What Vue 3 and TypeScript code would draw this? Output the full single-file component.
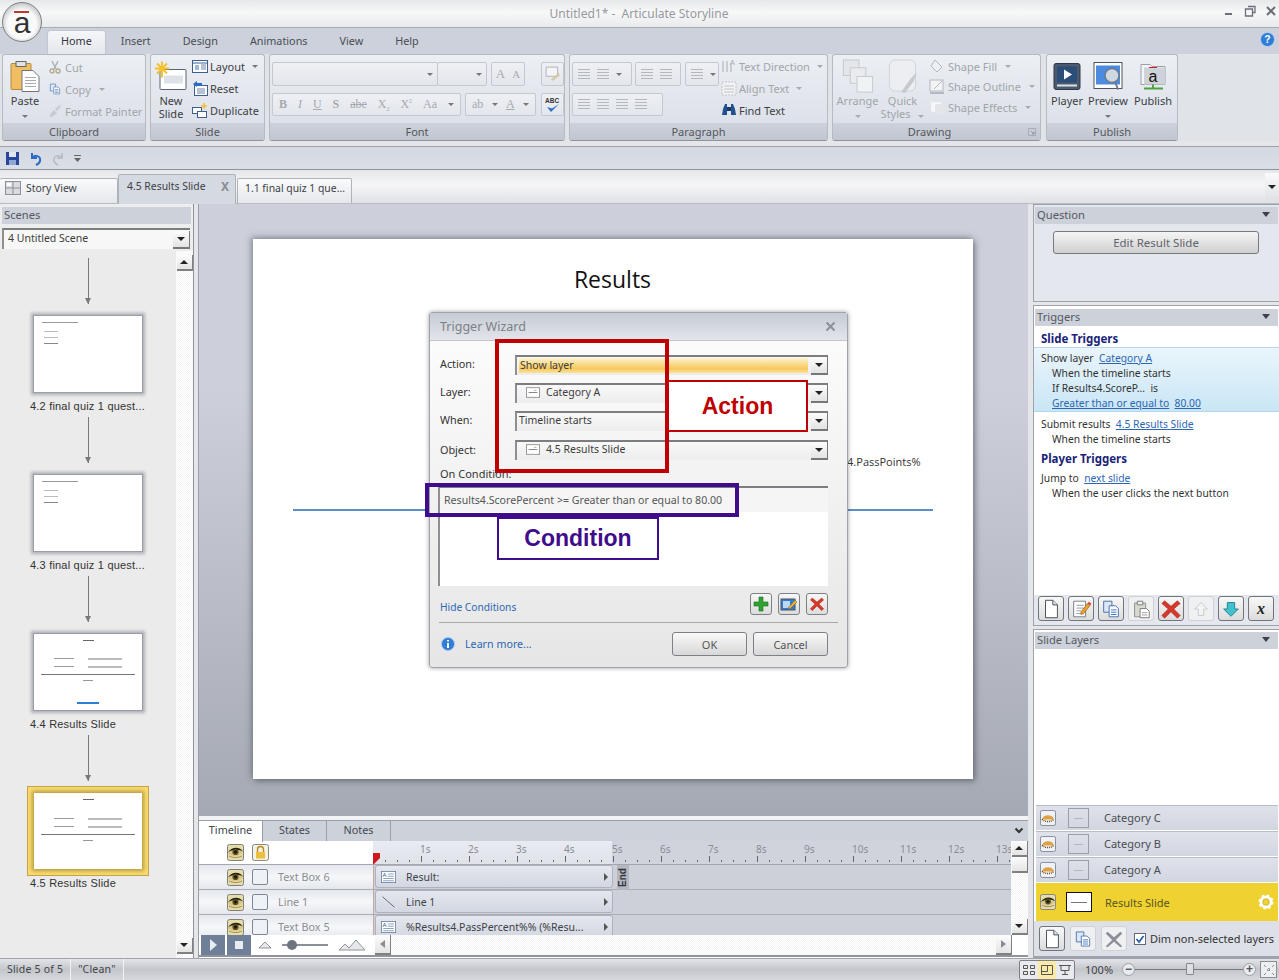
<script setup lang="ts">
import { computed } from 'vue';

interface SlideThumb {
  name: string;
  kind: 'quiz' | 'results' | 'final';
}

const slides: SlideThumb[] = [
  { name: '4.2 final quiz 1 quest...', kind: 'quiz' },
  { name: '4.3 final quiz 1 quest...', kind: 'quiz' },
  { name: '4.4 Results Slide', kind: 'results' },
  { name: '4.5 Results Slide', kind: 'final' },
];

const ribbonTabs = ['Insert', 'Design', 'Animations', 'View', 'Help'];

const triggerTools = ['doc', 'edit', 'copy', 'paste', 'cross', 'up', 'down', 'var'];

const layers = ['Category C', 'Category B', 'Category A'];

const tracks = [
  { name: 'Text Box 6', label: 'Result:', icon: 'textbox' },
  { name: 'Line 1', label: 'Line 1', icon: 'line' },
  { name: 'Text Box 5', label: '%Results4.PassPercent%% (%Resu...', icon: 'textbox' },
];

const secondPx = 48;

// ruler is 637px wide, one label per second and a small tick every quarter
const ticks = computed(() => {
  const list: { x: number; major: boolean }[] = [];
  for (let i = 1; i <= 53; i++) {
    list.push({ x: i * (secondPx / 4), major: i % 4 === 0 });
  }
  return list;
});

const seconds = computed(() => Array.from({ length: 13 }, (_, i) => i + 1));
</script>

<template>
  <svg class="defs" width="0" height="0">
    <symbol id="eye" viewBox="0 0 17 17">
      <rect x=".5" y=".5" width="16" height="16" rx="2" fill="#e6dcaa" stroke="#80807a" />
      <path d="M1 9C4 3 13 2 16 8 13 13 5 14 1 9z" fill="#d8c588" />
      <path d="M1 8.500C4 2.500 13 2 16 7.500 12 5.500 5 5.500 1 8.500z" fill="#26231a" />
      <circle cx="8.500" cy="8" r="3.100" fill="#5b4f20" />
      <circle cx="8.500" cy="8" r="1.400" fill="#14110a" />
      <path d="M2 12c4 2 9 2 13 0" stroke="#a08a4d" fill="none" />
    </symbol>
    <symbol id="eye-shut" viewBox="0 0 17 17">
      <rect x=".5" y=".5" width="16" height="16" rx="2" fill="#eef1f6" stroke="#7e8795" />
      <path d="M2 10C3 4 14 4 15 10z" fill="#e0a145" />
      <path d="M2 10c4 3 9 3 13 0" stroke="#6b4a15" stroke-width="1.600" fill="none" stroke-dasharray="1 1" />
    </symbol>
    <symbol id="doc" viewBox="0 0 24 24">
      <path d="M6 2.500h8l5 5v14H6z" fill="#fff" stroke="#3c4654" />
      <path d="M14 2.500v5h5" fill="#dfe8f2" stroke="#3c4654" />
    </symbol>
    <symbol id="edit" viewBox="0 0 24 24">
      <path d="M4 3.500h13v17H4z" fill="#fff" stroke="#6d7785" />
      <path d="M7 8h8M7 11h8M7 14h5M7 17h5" stroke="#8c95a3" />
      <path d="M12 15l7-9 3 2-7 9-3 1z" fill="#e8a233" stroke="#8d5c14" stroke-width=".7" />
      <path d="M19 6l1.500-2 3 2-1.500 2z" fill="#d8493f" />
    </symbol>
    <symbol id="copy" viewBox="0 0 24 24">
      <path d="M4 3.500h9v12H4z" fill="#dce8f8" stroke="#3f69a8" />
      <path d="M10 8.500h7l3 3v9H10z" fill="#fff" stroke="#3f69a8" />
      <path d="M12 13h6M12 15.500h6M12 18h6" stroke="#2f6fc0" />
    </symbol>
    <symbol id="paste" viewBox="0 0 24 24">
      <path d="M5 5.500h12v15H5z" fill="#d9d9d2" stroke="#8a8a86" />
      <path d="M8 3.500h6v4H8z" fill="#eee" stroke="#777" />
      <path d="M11 11.500h7l3 3v7H11z" fill="#fff" stroke="#777" />
      <path d="M13 16h6M13 18.500h6" stroke="#999" />
    </symbol>
    <symbol id="cross" viewBox="0 0 24 24">
      <path d="M5 3l7 6 7-6 3 3-7 6 7 7-3 3-7-7-7 7-3-3 7-7-7-6z" fill="#d4392a" stroke="#9c2318" stroke-width=".6" />
    </symbol>
    <symbol id="up" viewBox="0 0 24 24">
      <path d="M12 5l7 7h-4v7H9v-7H5z" fill="#f4f4f4" stroke="#c7c7c7" />
    </symbol>
    <symbol id="down" viewBox="0 0 24 24">
      <path d="M12 20l8-8h-4V5H8v7H4z" fill="#41c3cf" stroke="#1f7d90" />
    </symbol>
    <symbol id="slide-mini" viewBox="0 0 16 12">
      <rect x=".5" y=".5" width="15" height="11" fill="#fff" stroke="#8c8c8c" />
      <path d="M3 6h10" stroke="#777" />
      <path d="M9 3.500h3" stroke="#aaa" />
    </symbol>
  </svg>

  <div class="app">
    <header class="titlebar">
      <div class="logo"><span class="logo-bar"></span><span class="logo-a">a</span></div>
      <span class="title-text">Untitled1* -&nbsp; Articulate Storyline</span>
      <div class="win-btns">
        <svg width="12" height="12" viewBox="0 0 12 12"><path d="M2 9h7" stroke="#6b6f78" stroke-width="2" /></svg>
        <svg width="12" height="12" viewBox="0 0 12 12"><path d="M4 1.500h7v6H9M1.500 4h7v7h-7z" fill="none" stroke="#6b6f78" stroke-width="1.300" /></svg>
        <svg width="12" height="12" viewBox="0 0 12 12"><path d="M2 2l8 8M10 2l-8 8" stroke="#6b6f78" stroke-width="2" /></svg>
      </div>
    </header>

    <nav class="ribbon-tabs">
      <div class="rtab rtab-active">Home</div>
      <div v-for="tab in ribbonTabs" :key="tab" class="rtab">{{ tab }}</div>
      <svg class="help" width="15" height="15" viewBox="0 0 16 16">
        <circle cx="8" cy="8" r="7.500" fill="#2f7dd6" stroke="#bcd6f2" />
        <text x="8" y="12" text-anchor="middle" font-size="11" font-weight="700" font-family="Liberation Sans" fill="#fff">?</text>
      </svg>
    </nav>

    <section class="ribbon">
      <div class="group g-clip">
        <div class="group-body">
          <div class="big w40">
            <svg class="big-ico" width="30" height="32" viewBox="0 0 30 32">
              <rect x="1" y="3" width="20" height="26" rx="1" fill="#f1bd62" stroke="#b78a3b" />
              <rect x="6" y="1" width="10" height="5" fill="#dfe3e8" stroke="#666" />
              <path d="M12 10h11l6 6v15H12z" fill="#fff" stroke="#70757d" />
              <path d="M15 17h11M15 20h11M15 23h11M15 26h11" stroke="#a7acb4" />
            </svg>
            <span>Paste</span>
            <i class="caret caret-big"></i>
          </div>
          <div class="small-col dim">
            <div class="small"><svg width="14" height="14" viewBox="0 0 14 14"><path d="M4 1l4 8M10 1L6 9" stroke="#a9adb4" stroke-width="1.300" /><circle cx="4" cy="11" r="2" fill="none" stroke="#b1a98c" stroke-width="1.300" /><circle cx="10" cy="11" r="2" fill="none" stroke="#b1a98c" stroke-width="1.300" /></svg>Cut</div>
            <div class="small"><svg width="14" height="14"><use href="#copy" /></svg>Copy <i class="caret"></i></div>
            <div class="small"><svg width="14" height="14" viewBox="0 0 14 14"><path d="M1 12l5-6 3 3-5 4zM7 5l5-4 1 1-4 5z" fill="#c6c9ce" /></svg>Format Painter</div>
          </div>
        </div>
        <div class="group-label">Clipboard</div>
      </div>

      <div class="group g-slide">
        <div class="group-body">
          <div class="big w36">
            <svg class="big-ico" width="32" height="32" viewBox="0 0 32 32">
              <rect x="5" y="9" width="26" height="20" rx="1" fill="#fff" stroke="#5a6472" />
              <rect x="9" y="15" width="19" height="8" fill="#dde1e8" />
              <path d="M7 1v16M0 8h14M2 3l10 10M12 3L2 13" stroke="#f3c22e" stroke-width="2" />
            </svg>
            <span>New</span><span>Slide</span>
          </div>
          <div class="small-col tight">
            <div class="small"><svg width="16" height="16" viewBox="0 0 16 16"><rect x=".5" y="2.500" width="15" height="12" fill="#fff" stroke="#3d5f90" /><path d="M.5 5h15" stroke="#3d5f90" /><path d="M3 7h4v5H3z" fill="#9fb7d8" /><path d="M9 7h5M9 9h5M9 11h5" stroke="#6c85a8" /></svg>Layout <i class="caret"></i></div>
            <div class="small"><svg width="16" height="16" viewBox="0 0 16 16"><rect x="2.500" y="5.500" width="13" height="10" fill="#fff" stroke="#3d5f90" /><path d="M5 9h8M5 11h8M5 13h8" stroke="#6c85a8" /><path d="M1 4l4-3v2h5v3H5v1z" fill="#2e6cc4" /></svg>Reset</div>
            <div class="small"><svg width="16" height="16" viewBox="0 0 16 16"><rect x=".5" y="5.500" width="9" height="6" fill="#fff" stroke="#3d5f90" /><rect x="5.500" y="9.500" width="9" height="6" fill="#fff" stroke="#3d5f90" /><path d="M12 1v6M9 4h6" stroke="#f3c22e" stroke-width="1.600" /></svg>Duplicate</div>
          </div>
        </div>
        <div class="group-label">Slide</div>
      </div>

      <div class="group g-font">
        <div class="group-body stacked">
          <div class="tool-row row-a">
            <div class="tool-box w166"><i class="caret"></i></div>
            <div class="tool-box w50"><i class="caret"></i></div>
            <div class="tool-box w34 ml4 dim-serif"><span>A</span><small>A</small></div>
            <div class="tool-box w23 ml16"><svg width="16" height="16" viewBox="0 0 14 14"><rect x="1" y="1" width="10" height="8" fill="#f4f4f4" stroke="#b9bcc2" /><path d="M5 12l7-6 1 2-6 5z" fill="#d5c9a6" /></svg></div>
          </div>
          <div class="tool-row row-b">
            <div class="tool-box w189 dim-serif fmt">
              <b>B</b><em>I</em><u>U</u><b>S</b><s>abe</s><span>X<sub>2</sub></span><span>X<sup>2</sup></span><span>Aa</span><i class="caret"></i>
            </div>
            <div class="tool-box w71 ml4 dim-serif fmt"><span>ab</span><i class="caret"></i><u>A</u><i class="caret"></i></div>
            <div class="tool-box w23 ml5"><svg width="18" height="18" viewBox="0 0 18 18"><text x="1" y="7" font-size="6.500" font-weight="700" font-family="Liberation Sans" fill="#333">ABC</text><path d="M3 11l4 5 8-8-7 4.500z" fill="#2d6fc4" /></svg></div>
          </div>
        </div>
        <div class="group-label">Font</div>
      </div>

      <div class="group g-para">
        <div class="group-body">
          <div class="stacked para-left">
            <div class="tool-row row-a">
              <div class="tool-box w60 lines"><i></i><i></i><i class="caret"></i></div>
              <div class="tool-box w46 ml3 lines"><i></i><i></i></div>
              <div class="tool-box w34 ml4 lines"><i></i><i class="caret"></i></div>
            </div>
            <div class="tool-row row-b">
              <div class="tool-box w91 lines"><i></i><i></i><i></i><i></i></div>
            </div>
          </div>
          <div class="small-col tight">
            <div class="small dim"><svg width="16" height="16" viewBox="0 0 16 16"><path d="M2 3v11M6 3v11M10 5v9" stroke="#a7abb2" /><text x="9" y="7" font-size="7" font-family="Liberation Sans" fill="#a7abb2">A</text></svg>Text Direction <i class="caret"></i></div>
            <div class="small dim"><svg width="16" height="16" viewBox="0 0 16 16"><rect x="1" y="2" width="14" height="13" fill="#f2f3f5" stroke="#c1c4ca" stroke-dasharray="2 1" /><path d="M3 6h10M3 9h10M3 12h10" stroke="#c1c4ca" /></svg>Align Text <i class="caret"></i></div>
            <div class="small"><svg width="16" height="16" viewBox="0 0 16 16"><path d="M2 7l2-5h2v11H1zM14 7l-2-5h-2v11h5z" fill="#24508f" /><path d="M6 5h4v4H6z" fill="#1c3c6c" /></svg>Find Text</div>
          </div>
        </div>
        <div class="group-label">Paragraph</div>
      </div>

      <div class="group g-draw">
        <div class="group-body">
          <div class="big w44 dim">
            <svg class="big-ico" width="32" height="36" viewBox="0 0 32 36"><rect x="1" y="1" width="16" height="16" fill="#e4e6ea" stroke="#c6c9cf" /><rect x="8" y="9" width="16" height="16" fill="#e9ebee" stroke="#c6c9cf" /><rect x="15" y="18" width="16" height="16" fill="#f1f2f4" stroke="#c6c9cf" /></svg>
            <span>Arrange</span>
            <i class="caret caret-big"></i>
          </div>
          <div class="big w44 dim">
            <svg class="big-ico" width="32" height="36" viewBox="0 0 32 36"><rect x="2" y="1" width="27" height="32" rx="6" fill="#eceef1" stroke="#d0d3d8" /><path d="M14 34l10-14 6-6-3 9-9 12z" fill="#c6c9ce" /></svg>
            <span>Quick</span><span>Styles <i class="caret"></i></span>
          </div>
          <div class="small-col dim shape-col">
            <div class="small"><svg width="16" height="16" viewBox="0 0 16 16"><path d="M6 2l7 7-5 5-6-6z" fill="#eef0f3" stroke="#b5b8be" /></svg>Shape Fill <i class="caret"></i></div>
            <div class="small"><svg width="16" height="16" viewBox="0 0 16 16"><rect x="1" y="1" width="13" height="11" fill="#f2f3f5" stroke="#b5b8be" /><path d="M1 14h14" stroke="#b5b8be" stroke-width="2" /><path d="M5 10l8-8" stroke="#b5b8be" /></svg>Shape Outline <i class="caret"></i></div>
            <div class="small"><svg width="16" height="16" viewBox="0 0 16 16"><rect x="2" y="3" width="11" height="10" rx="2" fill="#f5f6f7" /><rect x="6" y="5" width="9" height="10" rx="2" fill="#e3e5e9" /></svg>Shape Effects <i class="caret"></i></div>
          </div>
        </div>
        <div class="group-label label-launch">
          Drawing
          <svg class="launcher" width="8" height="8" viewBox="0 0 8 8"><path d="M.5.5h7v7h-7z" fill="none" stroke="#a7abb2" /><path d="M3 3l3 3M6 4v2H4" fill="none" stroke="#8f939b" /></svg>
        </div>
      </div>

      <div class="group g-pub">
        <div class="group-body pub-body">
          <div class="big w40p nowrap">
            <svg class="big-ico" width="28" height="32" viewBox="0 0 28 32"><rect x="1" y="3" width="26" height="26" rx="2" fill="#4b5a6d" stroke="#2f3946" /><rect x="4" y="6" width="20" height="16" fill="#2a4e78" /><path d="M11 9l8 5-8 5z" fill="#fff" /><path d="M4 25h20" stroke="#dfe3e8" stroke-width="2" /></svg>
            <span>Player</span>
          </div>
          <div class="big w42p nowrap">
            <svg class="big-ico" width="30" height="32" viewBox="0 0 30 32"><rect x="1" y="2" width="28" height="26" fill="#fff" stroke="#4c5560" /><rect x="3" y="5" width="24" height="19" fill="#4c8be0" /><circle cx="19" cy="15" r="7" fill="#cfd8e2" stroke="#6e7b8a" stroke-width="1.500" /><path d="M22 21l3 8" stroke="#6e7b8a" stroke-width="2" /></svg>
            <span>Preview</span>
            <i class="caret caret-big"></i>
          </div>
          <div class="big w48p nowrap">
            <svg class="big-ico" width="30" height="32" viewBox="0 0 30 32"><path d="M3 4h9l2 2h13v18H3z" fill="#f4f5f7" stroke="#9aa0a8" /><rect x="6" y="7" width="21" height="17" fill="#cfd2d8" /><text x="15" y="21" text-anchor="middle" font-size="16" font-family="Liberation Sans" fill="#111">a</text><path d="M11 7h8" stroke="#c22" /><path d="M6 28h19M15 24v4" stroke="#4ea33a" stroke-width="2" /></svg>
            <span>Publish</span>
          </div>
        </div>
        <div class="group-label">Publish</div>
      </div>
    </section>

    <section class="qat">
      <svg width="15" height="15" viewBox="0 0 15 15"><rect x="1" y="1" width="13" height="13" fill="#28479a" /><rect x="4" y="1" width="7" height="5" fill="#dfe6f4" /><rect x="4" y="9" width="7" height="5" fill="#8fa6d6" /></svg>
      <svg class="q-undo" width="15" height="15" viewBox="0 0 15 15"><path d="M4 2v5h5M4 7c3-4 9-2 8 3-.3 2-2 3-4 4" fill="none" stroke="#2b6bc4" stroke-width="2" /></svg>
      <svg class="q-redo" width="15" height="15" viewBox="0 0 15 15"><path d="M11 2v5H6M11 7C8 3 2 5 3 10c.3 2 2 3 4 4" fill="none" stroke="#b5b9c0" stroke-width="1.500" /></svg>
      <svg class="q-more" width="9" height="9" viewBox="0 0 9 9"><path d="M1 1.500h7" stroke="#666" /><path d="M1 4h7L4.500 8z" fill="#666" /></svg>
    </section>

    <section class="doc-tabs">
      <div class="dtab dtab-story">
        <svg width="16" height="14" viewBox="0 0 16 14"><rect x=".5" y=".5" width="15" height="13" fill="#d8dbe0" stroke="#8d9097" /><path d="M8 .5v13M.5 7h15" stroke="#8d9097" /><rect x="2" y="2" width="4" height="3" fill="#fff" /></svg>
        Story View
      </div>
      <div class="dtab dtab-active">4.5 Results Slide <span class="dtab-x">X</span></div>
      <div class="dtab dtab-other">1.1 final quiz 1 que...</div>
      <div class="dtab-more"><i class="arrow-down"></i></div>
    </section>

    <main class="workspace">
      <aside class="left">
        <div class="panel-head">Scenes</div>
        <div class="combo scene-combo">
          <span>4 Untitled Scene</span>
          <span class="combo-btn"><i class="arrow-down"></i></span>
        </div>
        <div class="scene-body">
          <div class="thumb-list">
            <div v-for="slide in slides" :key="slide.name" class="thumb-item">
              <div class="connector"><i></i></div>
              <div class="thumb" :class="{ 'thumb-on': slide.kind === 'final' }">
                <template v-if="slide.kind === 'quiz'">
                  <div class="q-line"></div>
                  <div class="q-opt"></div>
                  <div class="q-opt"></div>
                  <div class="q-opt q-opt-on"></div>
                </template>
                <template v-else>
                  <div class="r-title"></div>
                  <div class="r-row"><i></i><b></b></div>
                  <div class="r-row"><i></i><b></b></div>
                  <div class="r-line"></div>
                  <div class="r-foot"></div>
                  <div v-if="slide.kind === 'results'" class="r-btn"></div>
                </template>
              </div>
              <div class="thumb-name">{{ slide.name }}</div>
            </div>
          </div>
          <div class="vscroll scene-scroll">
            <div class="sbtn"><i class="arrow-up"></i></div>
            <div class="sbtn"><i class="arrow-down"></i></div>
          </div>
        </div>
      </aside>

      <div class="center">
        <div class="stage">
          <div class="slide">
            <div class="slide-title">Results</div>
            <div class="slide-var">%Results4.PassPoints%</div>
            <div class="slide-rule"></div>
          </div>

          <div class="dialog">
            <div class="dialog-title">
              <span>Trigger Wizard</span>
              <svg width="11" height="11" viewBox="0 0 11 11"><path d="M1.500 1.500l8 8M9.500 1.500l-8 8" stroke="#8b9099" stroke-width="2" /></svg>
            </div>
            <div class="dialog-form">
              <label>Action:</label>
              <div class="combo"><span class="combo-hi">Show layer</span><span class="combo-btn"><i class="arrow-down"></i></span></div>
              <label>Layer:</label>
              <div class="combo"><span class="combo-val"><svg width="14" height="11"><use href="#slide-mini" /></svg>Category A</span><span class="combo-btn"><i class="arrow-down"></i></span></div>
              <label>When:</label>
              <div class="combo"><span>Timeline starts</span><span class="combo-btn"><i class="arrow-down"></i></span></div>
              <label class="obj-label">Object:</label>
              <div class="combo"><span class="combo-val"><svg width="14" height="11"><use href="#slide-mini" /></svg>4.5 Results Slide</span><span class="combo-btn"><i class="arrow-down"></i></span></div>
            </div>
            <div class="cond-label">On Condition:</div>
            <div class="cond-list">
              <div class="cond-row">Results4.ScorePercent &gt;= Greater than or equal to 80.00</div>
            </div>
            <div class="cond-actions">
              <span class="link hide-link">Hide Conditions</span>
              <div class="cond-btns">
                <button><svg width="16" height="16" viewBox="0 0 16 16"><path d="M6 1h4v5h5v4h-5v5H6v-5H1V6h5z" fill="#2fa32f" stroke="#1c6d1c" stroke-width=".6" /></svg></button>
                <button><svg width="18" height="16" viewBox="0 0 18 16"><rect x="1" y="3" width="14" height="11" fill="#2f7dd6" stroke="#555" /><rect x="3" y="5" width="7" height="7" fill="#bcd8f6" /><path d="M8 12l7-8 2 2-7 7z" fill="#e8b23b" stroke="#7a5a13" stroke-width=".5" /></svg></button>
                <button><svg width="16" height="16" viewBox="0 0 24 24"><use href="#cross" /></svg></button>
              </div>
            </div>
            <div class="dialog-foot">
              <svg width="14" height="14" viewBox="0 0 14 14"><circle cx="7" cy="7" r="6.500" fill="#2f7dd6" stroke="#a9c8ee" /><path d="M7 3v1.500M7 6v5" stroke="#fff" stroke-width="2" /></svg>
              <span class="link learn">Learn more...</span>
              <button class="dlg-btn">OK</button>
              <button class="dlg-btn">Cancel</button>
            </div>

            <div class="note note-red"></div>
            <div class="note note-action">Action</div>
            <div class="note note-purple"></div>
            <div class="note note-cond">Condition</div>
          </div>
        </div>

        <div class="timeline">
          <div class="tl-tabs">
            <div class="tl-tab tl-tab-on">Timeline</div>
            <div class="tl-tab">States</div>
            <div class="tl-tab">Notes</div>
            <svg class="tl-chev" width="10" height="8" viewBox="0 0 10 8"><path d="M1.500 1.500L5 5l3.500-3.500" fill="none" stroke="#333" stroke-width="2" /></svg>
          </div>
          <div class="tl-main">
            <div class="tl-grid">
              <div class="tl-head">
                <div class="tl-head-left">
                  <svg width="17" height="17"><use href="#eye" /></svg>
                  <svg class="lock" width="17" height="17" viewBox="0 0 17 17"><rect x=".5" y=".5" width="16" height="16" rx="2" fill="#f3f1e4" stroke="#8a8a80" /><path d="M5.500 8V5.500a3 3 0 016 0V8" fill="none" stroke="#b98a1e" stroke-width="1.400" /><rect x="4" y="8" width="9" height="6.500" fill="#edbf3f" /></svg>
                </div>
                <div class="ruler">
                  <div class="ruler-past"></div>
                  <span v-for="s in seconds" :key="s" class="ruler-num" :style="{ left: s * secondPx + 'px' }">{{ s }}s</span>
                  <i v-for="t in ticks" :key="t.x" class="tick" :class="{ 'tick-big': t.major }" :style="{ left: t.x + 'px' }"></i>
                  <svg class="playhead" width="7" height="11" viewBox="0 0 7 11"><path d="M0 0h7v5l-6 6H0z" fill="#d0181f" /></svg>
                </div>
              </div>
              <div v-for="tr in tracks" :key="tr.name" class="tl-row">
                <div class="tl-name">
                  <svg width="17" height="17"><use href="#eye" /></svg>
                  <span class="tl-check"></span>
                  <span class="tl-label">{{ tr.name }}</span>
                </div>
                <div class="tl-bar">
                  <svg v-if="tr.icon === 'textbox'" width="15" height="12" viewBox="0 0 20 16">
                    <rect x=".5" y=".5" width="19" height="15" fill="#fff" stroke="#5e7696" />
                    <text x="2" y="8.500" font-size="8" font-family="Liberation Sans" fill="#26518a">A</text>
                    <path d="M9 4h8M9 7h8M3 10h14M3 13h14" stroke="#6a84a8" />
                  </svg>
                  <svg v-else width="15" height="12" viewBox="0 0 20 16"><path d="M2 1l16 14" stroke="#444" /></svg>
                  <span>{{ tr.label }}</span>
                  <i class="arrow-right"></i>
                </div>
                <div class="tl-rest"></div>
              </div>
              <div class="end-tag">End</div>
            </div>
            <div class="vscroll tl-scroll">
              <div class="sbtn"><i class="arrow-up"></i></div>
              <div class="sbtn sthumb"></div>
              <div class="sbtn"><i class="arrow-down"></i></div>
            </div>
          </div>
          <div class="tl-bottom">
            <div class="tl-play"><i class="play"></i></div>
            <div class="tl-play"><i class="stop"></i></div>
            <div class="tl-zoom">
              <svg width="14" height="8" viewBox="0 0 14 8"><path d="M1 7l6-6 6 6z" fill="#e6e8ec" stroke="#8f949c" /></svg>
              <div class="tl-slider"><i></i></div>
              <svg width="28" height="12" viewBox="0 0 28 12"><path d="M1 11l6-6 4 4 7-8 9 10z" fill="#e6e8ec" stroke="#8f949c" /></svg>
            </div>
            <div class="tl-hscroll">
              <div class="sbtn"><i class="arrow-left"></i></div>
              <div class="sbtn"><i class="arrow-right grey"></i></div>
            </div>
          </div>
        </div>
      </div>

      <aside class="right">
        <div class="rpanel rp-question">
          <div class="panel-head with-arrow">Question<i class="arrow-down"></i></div>
          <button class="edit-slide">Edit Result Slide</button>
        </div>

        <div class="rpanel rp-triggers">
          <div class="panel-head with-arrow">Triggers<i class="arrow-down"></i></div>
          <div class="trig-list">
            <div class="trig-head">Slide Triggers</div>
            <div class="trig-sel">
              <div class="trig">Show layer&nbsp; <a>Category A</a></div>
              <div class="trig in">When the timeline starts</div>
              <div class="trig in">If Results4.ScoreP...&nbsp; is</div>
              <div class="trig in"><a>Greater than or equal to</a>&nbsp; <a>80.00</a></div>
            </div>
            <div class="trig">Submit results&nbsp; <a>4.5 Results Slide</a></div>
            <div class="trig in">When the timeline starts</div>
            <div class="trig-head th2">Player Triggers</div>
            <div class="trig sp2">Jump to&nbsp; <a>next slide</a></div>
            <div class="trig in">When the user clicks the next button</div>
          </div>
          <div class="trig-tools">
            <button v-for="tool in triggerTools" :key="tool" :class="{ faded: tool === 'up' || tool === 'paste' }">
              <span v-if="tool === 'var'" class="var-x">x</span>
              <svg v-else width="22" height="22"><use :href="'#' + tool" /></svg>
            </button>
          </div>
        </div>

        <div class="rpanel rp-layers">
          <div class="panel-head with-arrow">Slide Layers<i class="arrow-down"></i></div>
          <div class="layer-space"></div>
          <div v-for="layer in layers" :key="layer" class="layer">
            <svg width="16" height="16"><use href="#eye-shut" /></svg>
            <span class="layer-thumb"><i></i></span>
            <span class="layer-name">{{ layer }}</span>
          </div>
          <div class="layer layer-on">
            <svg width="16" height="16"><use href="#eye" /></svg>
            <span class="layer-thumb"><i></i></span>
            <span>Results Slide</span>
            <svg class="gear" width="16" height="16" viewBox="0 0 16 16"><circle cx="8" cy="8" r="5" fill="none" stroke="#fff" stroke-width="3" /><circle cx="8" cy="8" r="6.500" fill="none" stroke="#fff" stroke-width="2" stroke-dasharray="2.500 2.600" /><circle cx="8" cy="8" r="3.200" fill="none" stroke="#b5a24a" stroke-width=".6" /></svg>
          </div>
          <div class="layer-tools">
            <button><svg width="22" height="22"><use href="#doc" /></svg></button>
            <button class="faded"><svg width="20" height="20"><use href="#copy" /></svg></button>
            <button class="faded"><svg width="22" height="22" viewBox="0 0 24 24"><path d="M5 4l7 6 7-6 2 2-7 7 7 7-2 1-7-6-7 6-2-1 7-7-7-7z" fill="#8b8f96" /></svg></button>
            <span class="chk"><svg width="10" height="10" viewBox="0 0 10 10"><path d="M1.500 5l2.500 3 4.500-6" fill="none" stroke="#2b5fa8" stroke-width="1.800" /></svg></span>
            <span class="chk-label">Dim non-selected layers</span>
          </div>
        </div>
      </aside>
    </main>

    <footer class="statusbar">
      <div class="st-cell">Slide 5 of 5</div>
      <div class="st-cell">"Clean"</div>
      <div class="st-fill"></div>
      <div class="st-views">
        <span><svg width="14" height="12" viewBox="0 0 14 12"><path d="M1.500 1.500h4v3h-4zM8.500 1.500h4v3h-4zM1.500 7.500h4v3h-4zM8.500 7.500h4v3h-4z" fill="none" stroke="#555" /></svg></span>
        <span class="st-view-on"><svg width="14" height="12" viewBox="0 0 14 12"><path d="M1.500 1.500h11v9h-11zM7.500 1.500v6h-6" fill="none" stroke="#555" /></svg></span>
        <span><svg width="14" height="12" viewBox="0 0 14 12"><path d="M1 1.500h12M3 1.500v5h8v-5M7 6.500v4M4 10.500h6" fill="none" stroke="#555" /></svg></span>
      </div>
      <div class="st-zoom">100%</div>
      <div class="st-slider">
        <span class="round">&minus;</span>
        <div class="st-track"><i></i></div>
        <span class="round">+</span>
      </div>
      <div class="st-fit"><svg width="14" height="14" viewBox="0 0 14 14"><path d="M2 2l2 2M12 2l-2 2M2 12l2-2M12 12l-2-2M7 5v4M5 7h4" stroke="#555" stroke-dasharray="1 1" /></svg></div>
    </footer>
  </div>
</template>

<style scoped>
.defs { position: absolute; }

.app {
  width: 1279px;
  height: 980px;
  overflow: hidden;
  display: flex;
  flex-direction: column;
  background: #e4e6ea;
  font-family: "Noto Sans", "Liberation Sans", sans-serif;
  font-size: 11px;
  color: #3c3f44;
  position: relative;
}

/* title bar */
.titlebar {
  height: 27px;
  flex: none;
  border-bottom: 1px solid #a9adb4;
  background: linear-gradient(#e6e8ea, #f7f8f8 45%, #e8eaec);
  display: flex;
  align-items: center;
  justify-content: center;
  position: relative;
}
.title-text { font-size: 12px; color: #97999e; margin-left: -1px; }
.logo {
  position: absolute;
  left: 2px;
  top: 2px;
  width: 38px;
  height: 38px;
  border-radius: 50%;
  background: radial-gradient(circle at 50% 55%, #fafafa 50%, #b9bbc0 80%);
  border: 1px solid #7d7f84;
  z-index: 3;
  display: flex;
  align-items: center;
  justify-content: center;
}
.logo-a { font: 30px/30px "Liberation Sans", sans-serif; color: #333; margin-top: 1px; }
.logo-bar { position: absolute; left: 11px; top: 8px; width: 15px; height: 2px; background: #c6362b; }
.win-btns { position: absolute; right: 2px; top: 5px; display: flex; gap: 9px; }

/* ribbon */
.ribbon-tabs {
  height: 26px;
  flex: none;
  box-sizing: border-box;
  background: #ccd1db;
  padding: 3px 0 0 48px;
  display: flex;
  position: relative;
  font-size: 10.800px;
}
.rtab { padding: 0 16px; line-height: 20px; color: #4a4d52; }
.rtab-active {
  padding: 0 13px;
  margin-right: 0;
  background: linear-gradient(#f5f6f8, #e4e7ed);
  border-radius: 3px 3px 0 0;
  color: #33363b;
  box-shadow: 0 0 2px #a8adb7;
  height: 23px;
}
.help { position: absolute; right: 4px; top: 4px; }

.ribbon {
  height: 87px;
  flex: none;
  display: flex;
  gap: 4px;
  padding-left: 2px;
  background: #e0e3e8;
}
.group {
  box-sizing: border-box;
  height: 87px;
  border: 1px solid #b6bac3;
  border-bottom-color: #8f939c;
  border-radius: 3px;
  background: linear-gradient(#eceff4, #d9dde6);
  display: flex;
  flex-direction: column;
}
.g-clip { width: 144px; }
.g-slide { width: 115px; }
.g-font { width: 296px; }
.g-para { width: 259px; }
.g-draw { width: 209px; }
.g-pub { width: 132px; margin-left: 1px; }
.group-body { flex: 1; display: flex; padding: 0 2px; min-height: 0; }
.group-label {
  height: 17px;
  line-height: 18px;
  text-align: center;
  background: linear-gradient(#cdd1da, #c2c6d0);
  color: #54575d;
}
.label-launch { position: relative; padding-right: 14px; }
.launcher { position: absolute; right: 4px; top: 5px; }
.big {
  display: flex;
  flex-direction: column;
  align-items: center;
  padding-top: 4px;
  line-height: 13px;
  flex: none;
}
.big-ico { height: 35px; flex: none; }
.w40 { width: 40px; }
.w36 { width: 36px; }
.w44 { width: 45px; }
.w40p { width: 40px; }
.w42p { width: 42px; }
.w48p { width: 48px; }
.nowrap { white-space: nowrap; }
.pub-body { padding: 0; }
.small-col { display: flex; flex-direction: column; padding: 1px 0 0 3px; white-space: nowrap; }
.small-col.tight { padding-top: 0; }
.shape-col { padding-left: 4px; }
.shape-col .small { height: 20.500px; }
.small { height: 22px; display: flex; align-items: center; gap: 3px; flex: none; }
.tight .small { gap: 2px; }
.small svg { flex: none; }
.dim { color: #a2a5aa; }
.caret {
  display: inline-block;
  width: 0;
  height: 0;
  border: 3px solid transparent;
  border-top: 3px solid #777;
  border-bottom: 0;
  margin-left: 5px;
  flex: none;
}
.dim .caret { border-top-color: #a8abb0; }
.caret-big { margin: 8px 0 0; }

.stacked { display: flex; flex-direction: column; padding-top: 7px; }
.para-left { width: 149px; flex: none; }
.tool-row { display: flex; }
.row-a { height: 24px; margin-bottom: 7px; }
.row-b { height: 23px; }
.tool-box {
  box-sizing: border-box;
  border: 1px solid #c4c8d0;
  border-radius: 2px;
  background: linear-gradient(#eef0f4, #e3e6ec);
  display: flex;
  align-items: center;
  justify-content: flex-end;
  padding: 0 4px;
  flex: none;
}
.w166 { width: 166px; }
.w50 { width: 50px; margin-left: -1px; }
.w34 { width: 34px; justify-content: center; gap: 7px; }
.w23 { width: 23px; justify-content: center; padding: 0; }
.w189 { width: 189px; }
.w71 { width: 71px; }
.w60 { width: 60px; }
.w46 { width: 46px; }
.w91 { width: 91px; }
.ml3 { margin-left: 3px; }
.ml4 { margin-left: 4px; }
.ml5 { margin-left: 5px; }
.ml16 { margin-left: 16px; }
.dim-serif { font-family: "Liberation Serif", serif; color: #a6a9af; font-size: 13px; }
.dim-serif small { font-size: 11px; }
.fmt { justify-content: space-between; padding: 0 6px; font-size: 12px; }
.fmt .caret { margin-left: 0; }
.fmt sub, .fmt sup { font-size: 6px; }
.lines { justify-content: flex-start; gap: 7px; padding: 0 5px; }
.lines i:not(.caret) {
  width: 12px;
  height: 11px;
  flex: none;
  background: repeating-linear-gradient(#b3b7be 0 1px, transparent 1px 3px);
}
.lines .caret { margin-left: 0; }
.para-left + .small-col { padding-left: 0; }

.qat {
  box-sizing: border-box;
  height: 24px;
  flex: none;
  margin-top: 5px;
  border-top: 1px solid #9ea2aa;
  border-bottom: 1px solid #8f939b;
  background: linear-gradient(#d4d8e1, #dadee6);
  display: flex;
  align-items: center;
  padding-left: 5px;
}
.q-undo { margin-left: 8px; }
.q-redo { margin-left: 8px; }
.q-more { margin-left: 7px; }

.doc-tabs {
  height: 34px;
  flex: none;
  box-sizing: border-box;
  padding-top: 4px;
  background: linear-gradient(#e4e6e9, #f6f6f7 45%, #dfe1e5);
  display: flex;
  align-items: flex-end;
  position: relative;
  border-bottom: 1px solid #b9bcc3;
  font-size: 10.400px;
}
.dtab {
  box-sizing: border-box;
  display: flex;
  align-items: center;
  border: 1px solid #aeb2b9;
  border-bottom: 0;
  height: 25px;
  padding-bottom: 6px;
  border-radius: 2px 2px 0 0;
  background: linear-gradient(#fafafb, #e5e7eb);
  white-space: nowrap;
}
.dtab-story { width: 118px; gap: 5px; padding-left: 5px; border-left: 0; padding-bottom: 6px; }
.dtab-active {
  width: 118px;
  height: 30px;
  padding: 0 6px 7px 8px;
  background: #d5d9e2;
  margin-bottom: -1px;
  justify-content: space-between;
}
.dtab-x { font-size: 12px; font-weight: 700; color: #8a8d93; }
.dtab-other { width: 115px; padding-left: 7px; margin-left: 1px; }
.dtab-more {
  position: absolute;
  right: 0;
  top: 3px;
  width: 14px;
  height: 28px;
  background: linear-gradient(#fafafb, #dfe1e5);
  display: flex;
  align-items: center;
  justify-content: center;
}

.arrow-down, .arrow-up, .arrow-left, .arrow-right { display: block; width: 0; height: 0; border: 4px solid transparent; }
.arrow-down { border-top: 4px solid #222; border-bottom: 0; }
.arrow-up { border-bottom: 4px solid #222; border-top: 0; }
.arrow-left { border-right: 5px solid #8a8d93; border-left: 0; }
.arrow-right { border-left: 4px solid #555; border-right: 0; }
.arrow-right.grey { border-left: 5px solid #8a8d93; }

/* main area */
.workspace {
  flex: 1;
  min-height: 0;
  display: flex;
  background: #e4e6ea;
}
.left {
  box-sizing: border-box;
  width: 194px;
  flex: none;
  border-right: 1px solid #8f939b;
  display: flex;
  flex-direction: column;
  padding-top: 3px;
  background: #eceded;
}
.panel-head {
  height: 17px;
  flex: none;
  line-height: 15px;
  padding-left: 2px;
  margin: 0 2px;
  background: #ccd1da;
  color: #55585e;
  font-size: 11.200px;
}
.with-arrow { display: flex; justify-content: space-between; align-items: center; padding-right: 8px; padding-bottom: 2px; box-sizing: border-box; }
.with-arrow .arrow-down { border-width: 4px; border-top-width: 5px; border-bottom-width: 0; border-top-color: #3d4048; }

.combo {
  box-sizing: border-box;
  height: 20px;
  display: flex;
  align-items: center;
  justify-content: space-between;
  border-top: 2px solid #7b7d80;
  border-left: 2px solid #8d8f92;
  background: linear-gradient(#f8f8f8, #ededed);
  color: #3d3d3d;
  padding-left: 2px;
  white-space: nowrap;
  font-size: 10.500px;
}
.combo > span:first-child { margin-top: -4px; }
.combo > .combo-hi:first-child { margin-top: -2px; }
.combo-btn {
  box-sizing: border-box;
  width: 17px;
  height: 18px;
  flex: none;
  background: linear-gradient(#fcfcfc, #e3e3e3);
  border-right: 1px solid #777;
  border-bottom: 2px solid #777;
  display: flex;
  align-items: center;
  justify-content: center;
}
.scene-combo { margin: 4px 3px 2px 2px; height: 21px; background: #f7f7f7; padding-left: 4px; }

.scene-body { flex: 1; min-height: 0; display: flex; background: #ebebeb; }
.thumb-list { flex: 1; padding-top: 7px; min-width: 0; }
.thumb-item { display: flex; flex-direction: column; align-items: center; height: 159px; }
.connector {
  height: 46px;
  width: 9px;
  flex: none;
  position: relative;
  margin-bottom: 12px;
}
.connector i {
  position: absolute;
  left: 4px;
  top: 0;
  bottom: 0;
  width: 1px;
  background: #77797d;
}
.connector i::after {
  content: "";
  position: absolute;
  left: -3px;
  bottom: 0;
  border: 3.500px solid transparent;
  border-top: 6px solid #77797d;
  border-bottom: 0;
}
.thumb {
  box-sizing: border-box;
  width: 108px;
  height: 76px;
  flex: none;
  background: #fff;
  box-shadow: 0 0 0 1px #9a9ea6, 0 0 3px 3px #aeb0b6;
  padding: 6px 8px;
  display: flex;
  flex-direction: column;
  position: relative;
}
.thumb-on {
  box-shadow: 0 0 4px 2px #b89a42, 0 0 0 6px #f9dc70, 0 0 0 7px #c7a24c;
}
.thumb-name {
  margin-top: 8px;
  align-self: flex-start;
  margin-left: 30px;
  font-size: 11px;
  letter-spacing: .2px;
  color: #333;
  white-space: nowrap;
  font-family: "Liberation Sans", sans-serif;
}
.q-line { width: 36px; height: 1px; background: #999; margin: 0 0 6px; }
.q-opt { width: 14px; height: 1px; background: #bbb; margin: 2px 0 3px 2px; }
.q-opt-on { background: #888; }
.r-title { width: 11px; height: 1px; background: #666; margin: 0 auto 18px; }
.r-row { display: flex; justify-content: center; gap: 14px; margin-bottom: 6px; }
.r-row i { width: 20px; height: 1px; background: #999; }
.r-row b { width: 34px; height: 2px; background: #bbb; }
.r-line { height: 1px; background: #70757d; margin: 0 -1px 5px; }
.r-foot { width: 10px; height: 1px; background: #999; margin: 0 auto; }
.r-btn { width: 22px; height: 6px; background: #2b7fd4; margin: 22px auto 0; }

.vscroll {
  box-sizing: border-box;
  flex: none;
  display: flex;
  flex-direction: column;
  justify-content: space-between;
  align-items: center;
  background: repeating-conic-gradient(#f4f4f4 0 25%, #fff 0 50%) 0 0/2px 2px;
}
.scene-scroll { width: 17px; padding: 4px 0; }
.sbtn {
  box-sizing: border-box;
  width: 16px;
  height: 16px;
  flex: none;
  background: linear-gradient(#fcfcfc, #e4e4e4);
  border-right: 1px solid #808080;
  border-bottom: 2px solid #808080;
  display: flex;
  align-items: center;
  justify-content: center;
}

.center {
  width: 830px;
  flex: none;
  margin-left: 4px;
  display: flex;
  flex-direction: column;
  border-left: 1px solid #9b9ea5;
  margin-right: 5px;
  box-sizing: border-box;
}
.stage {
  flex: 1;
  min-height: 0;
  background: linear-gradient(#cdd0da, #cdd0da 30%, #a5a9b3);
  display: flex;
  align-items: center;
  justify-content: center;
  position: relative;
  padding: 0 2px 2px 0;
}
.slide {
  width: 720px;
  height: 540px;
  background: #fff;
  box-shadow: -2px -2px 6px rgba(90, 95, 105, .5), 2px 2px 6px rgba(70, 75, 85, .6);
  position: relative;
  font-family: "Open Sans", sans-serif;
  color: #111;
}
.slide-title { text-align: center; font-size: 23px; line-height: 32px; padding-top: 24px; }
.slide-var { position: absolute; right: 52px; top: 215px; font-size: 11px; color: #333; }
.slide-rule { position: absolute; left: 40px; right: 40px; top: 270px; height: 2px; background: #5b8ec8; }

.dialog {
  position: absolute;
  left: 230px;
  top: 108px;
  width: 419px;
  height: 356px;
  box-sizing: border-box;
  border: 1px solid #9fa3aa;
  border-radius: 3px;
  background: linear-gradient(#fdfdfd, #f4f4f4 40%, #e6e6e6);
  display: flex;
  flex-direction: column;
  box-shadow: 0 0 4px rgba(60, 60, 70, .5);
}
.dialog-title {
  height: 27px;
  flex: none;
  padding: 0 11px 0 10px;
  display: flex;
  align-items: center;
  justify-content: space-between;
  background: linear-gradient(#c6cbd4, #e2e5ea);
  font-size: 12.500px;
  color: #7b7f86;
  border-bottom: 1px solid #c2c6cd;
}
.dialog-form {
  display: grid;
  grid-template-columns: 75px 313px;
  grid-auto-rows: 28px;
  padding: 14px 0 0 10px;
  align-items: start;
  height: 100px;
  flex: none;
  font-size: 10.800px;
}
.dialog-form label { line-height: 17px; color: #333; }
.dialog-form .obj-label { margin-top: 2px; }
.combo-hi {
  flex: 1;
  background: linear-gradient(#fbf4d0, #f8c85c 70%, #fbe39a);
  margin: 0 3px 0 0;
  height: 15px;
  line-height: 14px;
  padding-left: 1px;
}
.combo-val { display: flex; align-items: center; gap: 6px; padding-left: 7px; }
.dialog-form .combo:last-child { margin-top: 1px; }
.cond-label { padding-left: 10px; line-height: 15px; margin-top: 11px; color: #333; }
.cond-list {
  box-sizing: border-box;
  margin: 5px 19px 0 8px;
  height: 100px;
  flex: none;
  background: #fff;
  border-top: 2px solid #7b7d80;
  border-left: 2px solid #8d8f92;
}
.cond-row {
  height: 24px;
  padding-left: 4px;
  line-height: 25px;
  background: #f5f5f5;
  color: #555;
  font-size: 10.600px;
  white-space: nowrap;
}
.cond-actions {
  height: 36px;
  flex: none;
  margin-right: 19px;
  padding-left: 10px;
  display: flex;
  align-items: center;
  justify-content: space-between;
}
.link { color: #2d66b4; }
.hide-link { font-size: 10.200px; padding-top: 6px; }
.cond-btns { display: flex; gap: 6px; }
.cond-btns button {
  box-sizing: border-box;
  width: 22px;
  height: 22px;
  padding: 0;
  border: 1px solid #7d8087;
  border-radius: 3px;
  background: linear-gradient(#f7f7f7, #dcdcdc);
  display: flex;
  align-items: center;
  justify-content: center;
}
.dialog-foot {
  flex: 1;
  margin: 0 9px;
  border-top: 1px solid #a8a8a8;
  padding: 0 10px 2px 2px;
  display: flex;
  align-items: center;
}
.learn { margin-left: 10px; flex: 1; font-size: 10.700px; }
.dlg-btn {
  box-sizing: border-box;
  width: 75px;
  height: 24px;
  margin-left: 6px;
  border: 1px solid #7d8087;
  border-radius: 3px;
  background: linear-gradient(#f9f9f9, #d8d8d8);
  font: 11px "Noto Sans", sans-serif;
  color: #555;
}

.note { position: absolute; box-sizing: border-box; font: 700 23px/1 "Liberation Sans", sans-serif; display: flex; align-items: center; justify-content: center; }
.note-red { left: 65px; top: 26px; width: 174px; height: 134px; border: 4px solid #c00000; }
.note-action { left: 237px; top: 67px; width: 141px; height: 52px; border: 2px solid #c00000; background: #fff; color: #c00000; }
.note-purple { left: -5px; top: 170px; width: 314px; height: 34px; border: 4px solid #3f0d8c; }
.note-cond { left: 67px; top: 204px; width: 162px; height: 43px; border: 2px solid #3f0d8c; background: #fff; color: #3f0d8c; }

/* timeline */
.timeline {
  height: 142px;
  flex: none;
  border-top: 4px solid #f2f3f5;
  box-sizing: border-box;
  display: flex;
  flex-direction: column;
  background: #fff;
  font-size: 10.800px;
}
.tl-tabs {
  height: 21px;
  flex: none;
  background: #ccd1da;
  border-top: 1px solid #9a9ea6;
  box-sizing: border-box;
  display: flex;
  position: relative;
}
.tl-tab {
  width: 64px;
  box-sizing: border-box;
  text-align: center;
  line-height: 18px;
  border-right: 1px solid #9a9ea6;
  color: #45484e;
}
.tl-tab-on { background: #fff; height: 21px; z-index: 1; }
.tl-chev { position: absolute; right: 4px; top: 6px; }
.tl-main { height: 94px; flex: none; display: flex; overflow: hidden; }
.tl-grid { width: 812px; flex: none; position: relative; overflow: hidden; }
.tl-head { height: 24px; display: flex; background: #fff; border-bottom: 1px solid #a3a6ad; box-sizing: border-box; }
.tl-head-left { width: 174px; flex: none; display: flex; gap: 8px; padding: 3px 0 0 28px; box-sizing: border-box; }
.ruler { flex: 1; position: relative; background: #d0d3db; overflow: hidden; }
.ruler-past { position: absolute; left: 0; top: 0; bottom: 0; width: 239px; background: linear-gradient(#e8ebf1, #dfe3ea); }
.ruler-num { position: absolute; top: 2px; transform: translateX(-1px); font-size: 10px; line-height: 13px; color: #8a8d94; }
.tick { position: absolute; bottom: 2px; width: 1px; height: 2px; background: #666; }
.tick-big { height: 6px; }
.playhead { position: absolute; left: 0; bottom: 0; }
.tl-row { height: 25px; display: flex; border-bottom: 1px solid #a9acb3; box-sizing: border-box; background: #cdd0d9; }
.tl-name {
  width: 175px;
  flex: none;
  box-sizing: border-box;
  display: flex;
  align-items: center;
  padding-left: 28px;
  background: linear-gradient(#e4e7ed, #f6f7f9 50%, #e4e7ed);
  border-right: 1px solid #c9a6a6;
  color: #8a8d93;
}
.tl-label { padding-bottom: 1px; }
.tl-check {
  box-sizing: border-box;
  width: 16px;
  height: 16px;
  margin: 0 10px 0 8px;
  border: 1px solid #7d8796;
  border-radius: 2px;
  background: #eef1f6;
}
.tl-bar {
  box-sizing: border-box;
  width: 238px;
  flex: none;
  height: 23px;
  margin: 0 0 0 1px;
  display: flex;
  align-items: center;
  gap: 10px;
  padding: 0 4px 0 5px;
  border: 1px solid #aeb2bb;
  border-radius: 3px;
  background: linear-gradient(#e4e7ee, #d3d7e1);
  color: #3f4248;
  white-space: nowrap;
  font-size: 10.500px;
}
.tl-bar span { flex: 1; }
.tl-bar svg, .tl-bar i { flex: none; }
.tl-rest { flex: 1; }
.end-tag {
  position: absolute;
  left: 418px;
  top: 24px;
  width: 12px;
  height: 25px;
  writing-mode: vertical-rl;
  transform: rotate(180deg);
  background: #b4b7bf;
  font: 700 10px/12px "Liberation Sans", sans-serif;
  text-align: center;
  color: #33363b;
}
.tl-scroll { width: 17px; }
.sthumb { height: 17px; margin-top: 0; margin-bottom: auto; }
.tl-scroll .sbtn { height: 16px; }
.tl-bottom { height: 22px; flex: none; display: flex; background: #fff; border-bottom: 2px solid #8f939b; box-sizing: border-box; }
.tl-play {
  width: 24px;
  margin: 0 0 0 2px;
  background: #6e7f97;
  display: flex;
  align-items: center;
  justify-content: center;
}
.play { border: 6px solid transparent; border-left: 7px solid #e7ebf2; border-right: 0; display: block; }
.stop { width: 8px; height: 8px; background: #e7ebf2; display: block; }
.tl-zoom { width: 124px; flex: none; display: flex; align-items: center; justify-content: space-between; padding: 0 9px 0 7px; box-sizing: border-box; }
.tl-slider { width: 46px; height: 2px; background: #8b8f97; position: relative; }
.tl-slider i { position: absolute; left: 5px; top: -4px; width: 10px; height: 10px; border-radius: 50%; background: #6e7480; }
.tl-hscroll {
  width: 637px;
  flex: none;
  display: flex;
  justify-content: space-between;
  background: repeating-conic-gradient(#f4f4f4 0 25%, #fff 0 50%) 0 0/2px 2px;
}
.tl-hscroll .sbtn { height: 20px; }

/* right column */
.right { width: 246px; flex: none; display: flex; flex-direction: column; gap: 3px; }
.rpanel { box-sizing: border-box; background: #fff; border: 1px solid #9ea2aa; border-right: 0; padding-top: 2px; display: flex; flex-direction: column; }
.rpanel .panel-head { margin: 0 1px; }
.rp-question { height: 98px; background: #e4e7ed; }
.edit-slide {
  box-sizing: border-box;
  height: 23px;
  width: 206px;
  margin: 7px 0 0 19px;
  border: 1px solid #77797e;
  border-radius: 3px;
  background: linear-gradient(#f5f5f5, #cfcfcf);
  font: 11.500px "Noto Sans", sans-serif;
  color: #60636a;
}
.rp-triggers { height: 321px; padding-top: 3px; }
.trig-list { flex: 1; padding-top: 5px; font-size: 10.300px; }
.trig-head { font-weight: 700; color: #1a2378; padding-left: 7px; line-height: 16px; font-size: 11.500px; }
.th2 { margin-top: 2px; line-height: 20px; }
.trig { padding-left: 7px; line-height: 15px; white-space: nowrap; color: #333; }
.trig.in { padding-left: 18px; }
.trig a { color: #2d66b4; text-decoration: underline; }
.trig-sel {
  background: linear-gradient(#eaf5fc, #c9e6f5);
  border-top: 1px solid #b3d9ee;
  border-bottom: 1px solid #b3d9ee;
  padding: 3px 0 0;
  margin: 0 0 5px;
}
.sp2 { margin-top: 2px; }
.trig-tools { display: flex; gap: 4px; padding: 0 0 3px 4px; height: 30px; box-sizing: border-box; background: #e4e7ed; align-items: center; }
.trig-tools button, .layer-tools button {
  box-sizing: border-box;
  width: 26px;
  height: 25px;
  padding: 0;
  flex: none;
  border: 1px solid #70747b;
  border-radius: 3px;
  background: linear-gradient(#f8f8f8, #dcdcdc);
  display: flex;
  align-items: center;
  justify-content: center;
}
.trig-tools button.faded, .layer-tools button.faded { border-color: #cfd1d5; background: #eff0f2; }
.var-x { font: italic 700 16px "Liberation Serif", serif; color: #222; }

.rp-layers { flex: 1; min-height: 0; }
.layer-space { flex: 1; }
.layer {
  height: 25px;
  margin: 1px 1px 0 2px;
  background: linear-gradient(#dfe2ea, #d2d6e0);
  display: flex;
  align-items: center;
  padding-left: 4px;
  flex: none;
  color: #4a4d53;
  border-top: 1px solid #b9bcc3;
  box-sizing: border-box;
}
.layer-name { padding-bottom: 2px; }
.layer-thumb {
  box-sizing: border-box;
  width: 21px;
  height: 20px;
  margin: 0 15px 0 12px;
  border: 1px solid #9a9ea6;
  display: flex;
  align-items: center;
  justify-content: center;
}
.layer-thumb i { width: 9px; height: 1px; background: #b3b6bd; }
.layer-on {
  height: 38px;
  background: #efd22f;
  border-top: 0;
  position: relative;
  color: #57522a;
}
.layer-on .layer-thumb { width: 26px; height: 20px; margin: 0 13px 0 10px; background: #fff; border-color: #111; }
.layer-on .layer-thumb i { width: 16px; background: #777; }
.gear { position: absolute; right: 4px; top: 11px; }
.layer-tools {
  height: 36px;
  flex: none;
  display: flex;
  align-items: center;
  gap: 5px;
  padding-left: 5px;
  background: #dde0e7;
  border-bottom: 1px solid #9ea2aa;
  box-sizing: border-box;
}
.chk {
  box-sizing: border-box;
  width: 12px;
  height: 12px;
  margin-left: 2px;
  border: 1px solid #667;
  background: #fff;
  display: flex;
  align-items: center;
  justify-content: center;
}
.chk-label { white-space: nowrap; color: #333; margin-left: -1px; }

/* status bar */
.statusbar {
  height: 22px;
  flex: none;
  display: flex;
  align-items: center;
  background: linear-gradient(#e2e4e8, #c3c6cc 50%, #d6d8dd);
  border-top: 1px solid #a1a4ab;
  box-sizing: border-box;
  color: #444;
}
.st-cell { padding: 0 7px; line-height: 21px; border-right: 1px solid #f2f3f5; white-space: nowrap; font-size: 10.500px; letter-spacing: .2px; }
.st-fill { flex: 1; }
.st-views {
  display: flex;
  height: 20px;
  border: 1px solid #7d8087;
  border-radius: 2px;
  background: #e8eaee;
  box-sizing: border-box;
  margin-right: 10px;
}
.st-views span { width: 18px; display: flex; align-items: center; justify-content: center; }
.st-view-on { background: #fbe9a6; }
.st-zoom { width: 34px; }
.st-slider { display: flex; align-items: center; width: 134px; margin-left: 3px; }
.round {
  width: 13px;
  height: 13px;
  border-radius: 50%;
  flex: none;
  background: #e9ebef;
  border: 1px solid #9da0a8;
  box-sizing: border-box;
  font: 700 12px/10px "Liberation Sans", sans-serif;
  text-align: center;
  color: #555;
}
.st-track { flex: 1; height: 1px; background: #777; position: relative; }
.st-track i { position: absolute; left: 51px; top: -6px; width: 8px; height: 12px; background: #dcdfe5; border: 1px solid #888; box-sizing: border-box; border-radius: 1px; }
.st-fit { box-sizing: border-box; width: 17px; height: 17px; margin: 0 2px 0 4px; border: 1px solid #8a8d94; background: #eceef1; display: flex; align-items: center; justify-content: center; }
</style>

<style>
html, body { margin: 0; background: #e4e6ea; }
</style>
